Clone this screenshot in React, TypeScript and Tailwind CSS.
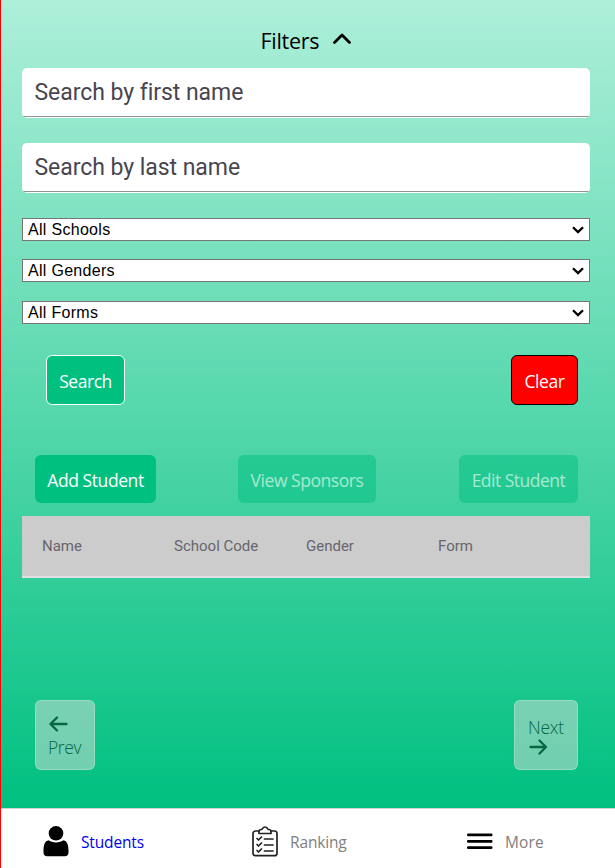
import type { ReactNode } from "react";

const stroke = {
  fill: "none",
  stroke: "currentColor",
  strokeLinecap: "round",
  strokeLinejoin: "round",
} as const;

function SearchField({ label }: { label: string }) {
  return (
    <div className="flex h-[50px] flex-col overflow-hidden rounded-[5px] bg-white">
      <div className="flex h-12 items-center border-0 pt-0.5 pl-[12.5px] font-[Roboto,sans-serif] text-[23px] tracking-[-0.05px] text-[#49454f]">
        {label}
      </div>
      <div className="h-px bg-[#949296]" />
    </div>
  );
}

function Select({ label }: { label: string }) {
  return (
    <div className="flex h-[23px] items-center justify-between border border-[#767676] bg-white pr-[5px] pl-[5px] font-['Liberation_Sans',Arial,sans-serif] text-base leading-none tracking-[0.3px] text-black">
      <span>{label}</span>
      <svg width="12" height="8" viewBox="0 0 12 8" {...stroke} strokeWidth="2.300" strokeLinecap="butt" strokeLinejoin="miter">
        <path d="M1 1.200 6 6.100 11 1.200" />
      </svg>
    </div>
  );
}

function Button({ className, children }: { className: string; children: ReactNode }) {
  return (
    <button className={`flex items-center justify-center rounded-md pt-[3px] text-[17.5px] leading-none whitespace-nowrap ${className}`}>
      {children}
    </button>
  );
}

function PersonIcon() {
  return (
    <svg width="26" height="31" viewBox="0 0 26 31" fill="black">
      <ellipse cx="13" cy="7.300" rx="7.300" ry="7.300" />
      <path d="M5.500 14.300C2 15 .5 19 .5 24.500v2C.5 29 1.800 30.200 4.200 30.200h17.600c2.400 0 3.700-1.200 3.700-3.700v-2c0-5.500-1.500-9.500-5-10.200-2.200 1.500-4.500 2.100-7.500 2.100s-5.300-.6-7.500-2.100z" />
    </svg>
  );
}

function ClipboardIcon() {
  return (
    <svg width="26" height="31" viewBox="0 0 26 31" {...stroke} strokeWidth="1.700" className="text-[#222]">
      <path d="M7 5H3.500A2.500 2.500 0 0 0 1 7.500v20A2.500 2.500 0 0 0 3.500 29.700h19a2.500 2.500 0 0 0 2.500-2.500v-20A2.500 2.500 0 0 0 22.500 5H19" />
      <path d="M7 7.500V5.200C7 4 8 3.500 9.500 3.500 10.500 3.500 10.600 1 13 1s2.500 2.500 3.500 2.500C18 3.500 19 4 19 5.200v2.300z" />
      <path d="m5 12.500 1.500 1.500L9.500 11M5 18.500 6.500 20l3-3M5 24.500 6.500 26l3-3M12.500 13H21M12.500 19H21M12.500 25H21" />
    </svg>
  );
}

export default function App() {
  return (
    <div className="flex h-[868px] w-[615px] flex-col overflow-hidden border-l border-[#ff0000] bg-white font-['Open_Sans','Noto_Sans',sans-serif] text-black">
      <main className="flex h-[808px] flex-col bg-linear-to-b/srgb from-[#aeefda] to-[#00c080] pr-[25px] pl-[21px]">
        <header className="flex h-[68px] items-start pt-[25px] pl-[238.5px]">
          <span className="w-[72.5px] text-[21.5px] leading-8 tracking-[-0.3px]">Filters</span>
          <svg width="18" height="12" viewBox="0 0 18 12" {...stroke} strokeWidth="2.800" className="mt-[8px]">
            <path d="m1.500 9.500 7.500-7.500 7.500 7.500" />
          </svg>
        </header>

        <div className="flex flex-col gap-[25px]">
          <SearchField label="Search by first name" />
          <SearchField label="Search by last name" />
        </div>

        <div className="mt-[25px] flex flex-col">
          <Select label="All Schools" />
          <div className="mt-[18px]"><Select label="All Genders" /></div>
          <div className="mt-[19px]"><Select label="All Forms" /></div>
        </div>

        <div className="mt-[31px] flex justify-between pr-3 pl-6">
          <Button className="h-[50px] w-[79px] border border-white bg-[#00c080] tracking-[-0.45px] text-white">Search</Button>
          <Button className="h-[50px] w-[67px] border border-black bg-[#ff0000] tracking-[-0.45px] text-white">Clear</Button>
        </div>

        <div className="mt-[50px] flex pl-[13px]">
          <Button className="h-12 w-[121px] bg-[#00c080] tracking-[-0.42px] text-white">Add Student</Button>
          <Button className="ml-[82px] h-12 w-[138px] bg-[#00c080] tracking-[-0.45px] text-white opacity-50">View Sponsors</Button>
          <Button className="ml-[83px] h-12 w-[119px] bg-[#00c080] tracking-[-0.5px] text-white opacity-50">Edit Student</Button>
        </div>

        <div className="mt-[13px] grid h-[62px] grid-cols-4 items-center border-b-2 border-[#e1dfe4] bg-[#cccccc] pr-5 pl-5 font-[Roboto,sans-serif] text-[15px] text-[#68656d]">
          <span>Name</span>
          <span>School Code</span>
          <span>Gender</span>
          <span>Form</span>
        </div>

        <div className="mt-[122px] flex justify-between pr-3 pl-[13px] text-[17.5px] leading-[22px]">
          <button className="flex h-[70px] w-[60px] flex-col items-start rounded-md border border-white/25 bg-[#dcdcdc]/50 pt-[15px] pl-3 text-[#066840]">
            <svg width="20" height="16" viewBox="0 0 20 16" {...stroke} strokeWidth="2.300" className="ml-px">
              <path d="M8 1.500 1.500 8 8 14.500M2 8h15.500" />
            </svg>
            <span className="mt-[4px] font-light tracking-[-0.4px]">Prev</span>
          </button>
          <button className="flex h-[70px] w-16 flex-col items-start rounded-md border border-white/25 bg-[#dcdcdc]/50 pt-[15px] pl-[13px] text-[#066840]">
            <span className="font-light tracking-[-0.2px]">Next</span>
            <svg width="20" height="16" viewBox="0 0 20 16" {...stroke} strokeWidth="2.300" className="mt-[1px] ml-px">
              <path d="M10.500 1.500 17 8l-6.500 6.500M1.500 8h15" />
            </svg>
          </button>
        </div>
      </main>

      <nav className="flex h-[60px] items-start border-t border-[#d4d4d4] pt-[17px] text-[15.5px] leading-8 text-[#808080]">
        <a className="flex w-[209px] items-start pl-[42px] text-[#0000ee]">
          <PersonIcon />
          <span className="ml-3 tracking-[-0.15px]">Students</span>
        </a>
        <a className="flex w-[216px] items-start pl-[42px]">
          <ClipboardIcon />
          <span className="ml-3 tracking-[-0.15px]">Ranking</span>
        </a>
        <a className="flex items-start pl-[41px]">
          <svg width="26" height="17" viewBox="0 0 26 17" fill="black" className="mt-[7px]">
            <rect width="25.500" height="2.800" rx="1.200" y="0.500" />
            <rect width="25.500" height="2.800" rx="1.200" y="6.900" />
            <rect width="25.500" height="2.800" rx="1.200" y="13.200" />
          </svg>
          <span className="ml-3 tracking-[0.1px]">More</span>
        </a>
      </nav>
    </div>
  );
}
